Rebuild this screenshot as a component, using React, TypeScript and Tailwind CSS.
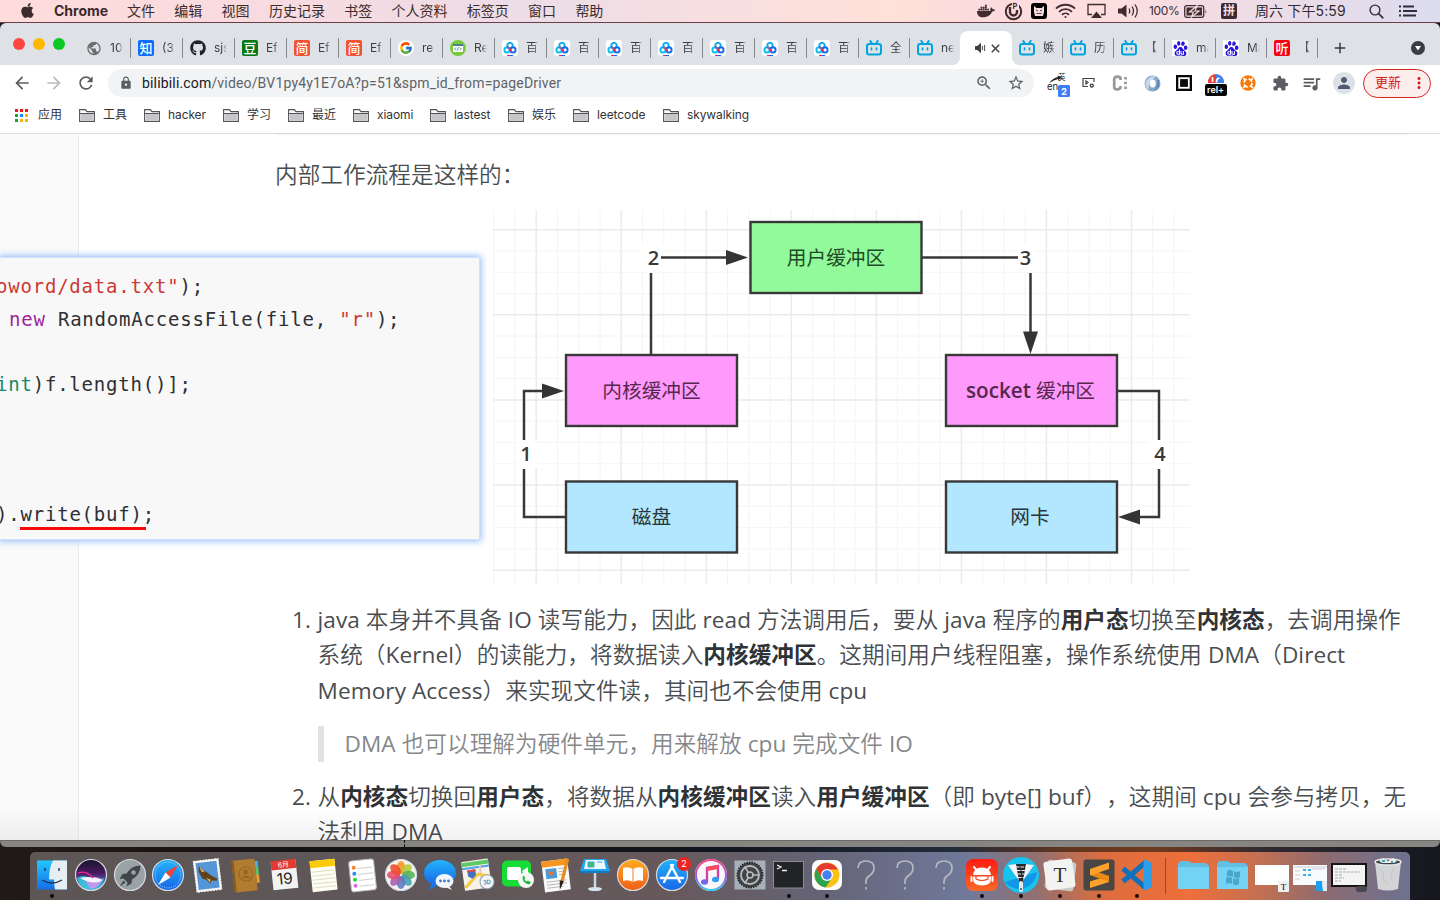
import type { ReactNode } from "react";
import { FaApple, FaDocker, FaGithub } from "react-icons/fa";
import { FcGoogle } from "react-icons/fc";
import { SiBaidu } from "react-icons/si";
import {
  MdArrowBack, MdArrowForward, MdRefresh, MdLock, MdZoomIn, MdStarBorder,
  MdExtension, MdQueueMusic, MdPerson, MdMoreVert, MdAdd, MdPublic,
} from "react-icons/md";

const ui = "font-[Inter,'Noto_Sans_CJK_SC',sans-serif]";

/* ---------- menu bar ---------- */
function MenuBar() {
  const menus = ["文件", "编辑", "视图", "历史记录", "书签", "个人资料", "标签页", "窗口", "帮助"];
  return (
    <header className="flex h-[23px] shrink-0 items-center border-b border-[#6d3d48] bg-[linear-gradient(90deg,#ffdcdb_0%,#f8dbe0_18%,#ecdde7_37%,#f8dfe0_50%,#ffe1d8_62%,#fcdadd_68%,#fedfde_76%,#efdce6_86%,#dcdcef_100%)] pl-[20px] text-[14px] text-[#3b2b2d]">
      <FaApple className="h-[17px] w-[15px] -translate-y-px" />
      <b className="-mt-px ml-[19px] w-[73px] text-[14px] font-bold">Chrome</b>
      <nav className="-mt-px flex gap-[19.300px] whitespace-nowrap">{menus.map((m) => <span key={m}>{m}</span>)}</nav>
      <div className="ml-auto flex h-full items-center text-[#402c30]">
        <FaDocker className="mr-[9px] h-[18px] w-[18px]" />
        <svg className="mr-[8px] h-[19px] w-[19px]" viewBox="0 0 19 19"><circle cx="9.5" cy="9.5" r="7.7" fill="none" stroke="currentColor" strokeWidth="2" /><path d="M6 5v5a3.5 3.5 0 0 0 7 0V8" fill="none" stroke="currentColor" strokeWidth="2.4" /><rect x="8" y="1" width="7" height="6" fill="#fde0e0" /><text x="8.500" y="6.500" fontSize="7.500" fontWeight="700" fill="currentColor">P</text></svg>
        <svg className="mr-[8px] h-[16px] w-[16px]" viewBox="0 0 16 16"><rect width="16" height="16" rx="3" fill="#000" /><path d="M3 3l2.500 2h5L13 3v6l-1 4H4L3 9z" fill="#f5dcdc" /><path d="M5 7l2 1M11 7L9 8M5.500 10.500h5" stroke="#5a4245" /></svg>
        <svg className="mr-[11px] h-[16px] w-[21px]" viewBox="0 0 21 16" fill="none" stroke="currentColor" strokeWidth="1.9"><path d="M1 5.6a13.5 13.5 0 0 1 19 0M4 8.8a9.2 9.2 0 0 1 13 0M7 11.8a5 5 0 0 1 7 0" /><circle cx="10.500" cy="14" r="1" fill="currentColor" stroke="none" /></svg>
        <svg className="mr-[12px] h-[16px] w-[19px]" viewBox="0 0 19 16"><path d="M5 11.500H1v-10h17v10h-4" fill="none" stroke="currentColor" strokeWidth="1.300" /><path d="M9.500 8.500l5.500 6.500h-11z" fill="currentColor" /></svg>
        <svg className="mr-[10px] h-[16px] w-[21px]" viewBox="0 0 21 16"><path d="M0 5.500h3.500L8.500 1.500v13L3.500 10.500H0z" fill="currentColor" /><path d="M11 5.500q1.500 2.500 0 5M14 3.500q3 4.500 0 9M17 1.500q4.500 6.500 0 13" fill="none" stroke="currentColor" strokeWidth="1.300" /></svg>
        <span className="w-[35px] text-[12px] tracking-[-0.300px]">100%</span>
        <svg className="mr-[15px] h-[13px] w-[23px]" viewBox="0 0 23 13"><rect x=".7" y=".7" width="19" height="11.600" rx="2" fill="none" stroke="currentColor" strokeWidth="1.300" /><path d="M21.500 4.500q1.500 2 0 4z" fill="currentColor" /><rect x="2.500" y="2.500" width="15.500" height="8" fill="currentColor" /><path d="M13 .8L5.500 7h4L7.500 12 15 6h-4z" fill="currentColor" stroke="#f6dde2" strokeWidth="1.200" /></svg>
        <span className="mr-[18px] -ml-px flex h-[16px] w-[16px] items-center justify-center rounded-[2px] bg-[#3a2c32] text-[12px] leading-none font-bold text-[#f4dfe6]">拼</span>
        <span className="-mt-px w-[114px] text-[14px] tracking-[0.120px] whitespace-nowrap text-[#332a33]">周六 下午5:59</span>
        <svg className="mr-[15px] h-[15px] w-[15px]" viewBox="0 0 15 15" fill="none" stroke="#35303e" strokeWidth="1.400"><circle cx="6" cy="6" r="4.900" /><path d="M9.700 9.700l4.600 4.600" strokeWidth="1.800" /></svg>
        <svg className="mr-[23px] h-[12px] w-[18px]" viewBox="0 0 18 12" stroke="#302d3c" strokeWidth="2"><path d="M0 1.500h2M4 1.500h11M0 6h2M4 6h14M0 10.500h2M4 10.500h13" /></svg>
      </div>
    </header>
  );
}

/* ---------- tab strip ---------- */
const Letter = ({ bg, children }: { bg: string; children: string }) => (
  <span className={`flex h-4 w-4 items-center justify-center rounded-[2px] text-[13px] leading-none font-medium text-white ${bg}`}>{children}</span>
);
const Bili = () => (
  <svg className="h-4 w-4" viewBox="0 0 16 16" fill="none" stroke="#00a5de" strokeWidth="2" strokeLinecap="round"><rect x="1" y="4" width="14" height="10.500" rx="2.300" /><path d="M4.300 1l1.700 2.500M11.700 1L10 3.500" /><path d="M5.500 8v1.600M10.500 8v1.600" strokeWidth="1.700" /></svg>
);
const Pan = () => (
  <svg className="h-4 w-4" viewBox="0 0 16 16"><rect width="16" height="16" rx="3" fill="#fff" /><g fill="none" strokeWidth="1.900"><circle cx="8" cy="5.600" r="2.700" stroke="#08aef5" /><circle cx="5" cy="9.900" r="2.600" stroke="#08bdf5" /><circle cx="11" cy="9.900" r="2.600" stroke="#126cf2" /><path d="M6.800 8.200l2.600 3M5.300 6.500l1 1.200" stroke="#f52b58" /></g><path d="M5 15.500h3" stroke="#f3264e" /><path d="M8 15.500h3" stroke="#1768ff" /></svg>
);
const Paw = () => <span className="flex h-4 w-4 items-center justify-center rounded-[1px] bg-white"><SiBaidu className="h-[15px] w-[15px] text-[#2b16dd]" /></span>;
const Globe = () => <MdPublic className="h-[17px] w-[17px] text-[#6d6e70]" />;
const Snippet = () => (
  <svg className="h-4 w-4" viewBox="0 0 16 16"><circle cx="8" cy="8" r="8" fill="#76cb39" /><rect x="3" y="4" width="10" height="8" rx="1" fill="#fff" /><path d="M3 5h10" stroke="#1c4e6f" strokeWidth="1.500" /><path d="M6 7.500L4.600 9 6 10.500M10 7.500L11.400 9 10 10.500M8.600 7.300l-1.200 3.300" fill="none" stroke="#317a91" strokeWidth=".8" /></svg>
);

const leftTabs: [ReactNode, string][] = [
  [<Globe />, "10"], [<Letter bg="bg-[#0a6cff]">知</Letter>, "(3"], [<FaGithub className="h-4 w-4 text-[#1f2328]" />, "sjs"],
  [<Letter bg="bg-[#087816]">豆</Letter>, "Ef"], [<Letter bg="bg-[#f4512f]">简</Letter>, "Ef"], [<Letter bg="bg-[#f4512f]">简</Letter>, "Ef"],
  [<span className="flex h-4 w-4 items-center justify-center rounded-full bg-white"><FcGoogle className="h-[14px] w-[14px]" /></span>, "re"],
  [<Snippet />, "Re"], [<Pan />, "百"], [<Pan />, "百"], [<Pan />, "百"], [<Pan />, "百"], [<Pan />, "百"], [<Pan />, "百"], [<Pan />, "百"],
];
const midTabs: [ReactNode, string][] = [[<Bili />, "全"], [<Bili />, "ne"]];
const rightTabs: [ReactNode, string][] = [[<Bili />, "嫉"], [<Bili />, "历"], [<Bili />, "【"], [<Paw />, "ma"], [<Paw />, "Ma"], [<Letter bg="bg-[#fb0010]">听</Letter>, "【"]];

function Tab({ icon, title, narrow, last }: { icon: ReactNode; title: string; narrow?: boolean; last?: boolean }) {
  return (
    <div className={`flex h-5 shrink-0 items-center border-r pl-[7px] ${last ? "border-transparent" : "border-[#85888c]"} ${narrow ? "w-[51px]" : "w-[52px]"}`}>
      <span className="flex w-4 shrink-0 justify-center">{icon}</span>
      <span className="ml-[8px] w-[13px] overflow-hidden [mask-image:linear-gradient(90deg,#000_60%,transparent)] text-[12px] leading-5 whitespace-nowrap text-[#3c3f43]">{title}</span>
    </div>
  );
}

function TabStrip() {
  return (
    <div className="flex h-[42px] shrink-0 items-start rounded-t-[6px] bg-[#dee1e6]">
      <div className="flex h-[42px] w-[79px] shrink-0 gap-2 pt-[15px] pl-[13px]">
        <i className="h-3 w-3 rounded-full bg-[#fb473f]" /><i className="h-3 w-3 rounded-full bg-[#fdb802]" /><i className="h-3 w-3 rounded-full bg-[#0bc925]" />
      </div>
      <div className="flex pt-[15px]">
        {leftTabs.map(([i, t], k) => <Tab key={k} icon={i} title={t} />)}
        {midTabs.map(([i, t], k) => <Tab key={k} icon={i} title={t} narrow last={k === 1} />)}
      </div>
      <div className="relative mt-2 -ml-px flex h-[34px] w-[52px] shrink-0 items-center gap-[5px] rounded-t-[8px] bg-white pl-[15px] before:absolute before:bottom-0 before:-left-2 before:h-2 before:w-2 before:bg-[radial-gradient(circle_at_0_0,transparent_8px,white_8px)] after:absolute after:-right-2 after:bottom-0 after:h-2 after:w-2 after:bg-[radial-gradient(circle_at_100%_0,transparent_8px,white_8px)]">
        <svg className="h-3 w-[11px]" viewBox="0 0 11 12"><path d="M0 4h2.300L6 .8v10.400L2.300 8H0z" fill="#3f4246" /><path d="M7.500 4v4M9.600 3v6" stroke="#56595d" strokeWidth="1.100" /></svg>
        <svg className="h-[9px] w-[9px]" viewBox="0 0 9 9"><path d="M.8.8l7.400 7.400M8.200.8L.8 8.200" stroke="#3f4246" strokeWidth="1.500" /></svg>
      </div>
      <div className="flex pt-[15px]">{rightTabs.map(([i, t], k) => <Tab key={k} icon={i} title={t} narrow />)}</div>
      <MdAdd className="mt-[16px] ml-[13px] h-[18px] w-[18px] text-[#35383b]" />
      <svg className="mt-[18px] mr-[15px] ml-auto h-[14px] w-[14px]" viewBox="0 0 14 14"><circle cx="7" cy="7" r="7" fill="#3a3d41" /><path d="M4 5h6L7 9.500z" fill="#fff" /></svg>
    </div>
  );
}

/* ---------- toolbar ---------- */
function Toolbar() {
  return (
    <div className="flex h-[36px] shrink-0 items-center bg-white pl-[12px] text-[#5a5d61]">
      <MdArrowBack className="h-[20px] w-[20px]" /><MdArrowForward className="ml-[12px] h-[20px] w-[20px] text-[#b9bbbe]" /><MdRefresh className="ml-[12px] h-[20px] w-[20px]" />
      <div className="ml-[12px] flex h-[28px] w-[926px] items-center rounded-full bg-[#f1f3f4] pl-[11px]">
        <MdLock className="h-[14px] w-[14px]" />
        <span className="ml-[9px] font-[Roboto,sans-serif] text-[14px] tracking-[0.165px] text-[#5f6368]"><span className="text-[#17191c]">bilibili.com</span>/video/BV1py4y1E7oA?p=51&amp;spm_id_from=pageDriver</span>
        <MdZoomIn className="mr-[14px] ml-auto h-[18px] w-[18px]" /><MdStarBorder className="mr-[9px] h-[18px] w-[18px]" />
      </div>
      <div className="ml-[13px] flex items-center">
        <svg className="h-[28px] w-[23px]" viewBox="0 0 23 28"><path d="M2 14q4-5 9-6l-.5-1.500 4 1.500-3 3.500-.3-1.500Q7 11 2 14z" fill="#222" /><text x="11" y="11" fontSize="7.500" fill="#222">英</text><text x="0" y="21" fontSize="9.500" fill="#222">en</text><rect x="11" y="16" width="12" height="12" rx="1.500" fill="#3b7df5" /><text x="14" y="25.500" fontSize="9.500" fontWeight="700" fill="#fff">2</text></svg>
        <svg className="ml-[12px] h-[12px] w-[13px]" viewBox="0 0 13 12" fill="none" stroke="#444"><path d="M12 5V1.500H1v8h5M4 4v3l2-1.500z" strokeWidth="1.200" /><circle cx="9.800" cy="8.600" r="1.500" strokeWidth="1.400" /></svg>
        <svg className="ml-[17px] h-[16px] w-[16px]" viewBox="0 0 16 16" fill="none" stroke="#989898" strokeWidth="2.700"><path d="M8.500 5V3.500Q8.500 1.700 5.500 1.700T2.200 4v8q0 2.300 3 2.300t3.300-2V11" /><path d="M13.500 2v12" strokeDasharray="2.500 2.200" /></svg>
        <svg className="ml-[16px] h-[17px] w-[17px]" viewBox="0 0 17 17"><circle cx="8.500" cy="8.500" r="8" fill="#86acd0" /><path d="M12 1.500Q6 0 2 6q-2 6 3 9Q3 7 12 1.500z" fill="#c6d8ea" /><path d="M15 5q2 8-5 11 4-6 3-11z" fill="#5d8dbd" /><ellipse cx="8.700" cy="8.500" rx="3" ry="4" fill="#fff" /></svg>
        <svg className="ml-[15px] h-[16px] w-[16px]" viewBox="0 0 16 16"><rect width="16" height="16" fill="#080808" /><rect x="3.200" y="3.200" width="9.600" height="9.600" fill="none" stroke="#fff" strokeWidth="1.800" /></svg>
        <svg className="ml-[13px] h-[28px] w-[22px]" viewBox="0 0 22 28"><path d="M3 14a8 8 0 0 1 8-9v9z" fill="#e84036" /><path d="M11 5a8 8 0 0 1 8 9h-8z" fill="#4380ef" /><path d="M7.500 8v5M14.500 9.500q-3-1-3 4" stroke="#fff" strokeWidth="1.700" fill="none" /><rect y="15" width="22" height="12" rx="2" fill="#050505" /><text x="2" y="24" fontSize="9" fontWeight="600" fill="#fff">rel+</text></svg>
        <svg className="ml-[13px] h-[16px] w-[16px]" viewBox="0 0 16 16"><circle cx="8" cy="8" r="7.700" fill="#f57a0c" /><circle cx="8" cy="8" r="4" fill="none" stroke="#fff" strokeWidth="1.600" strokeDasharray="4.500 1.800" /><path d="M11 5l2-2M5 11l-2 2M5 5L3.500 3M11 11l2 2" stroke="#fff" strokeWidth="1.500" /></svg>
        <MdExtension className="ml-[16px] h-[17px] w-[17px]" /><MdQueueMusic className="ml-[12px] h-[21px] w-[21px]" />
        <span className="ml-[11px] flex h-[22px] w-[22px] items-center justify-center rounded-full bg-[#dde1e6]"><MdPerson className="h-[18px] w-[18px] text-[#4c5a73]" /></span>
        <span className="ml-[8px] flex h-[29px] w-[68px] items-center rounded-full border border-[#d7251f] bg-[#fceeed] pl-[11px] text-[13px] whitespace-nowrap text-[#d32020]">更新<MdMoreVert className="ml-[9px] h-[18px] w-[18px] shrink-0" /></span>
      </div>
    </div>
  );
}

const bookmarks: [string, string][] = [
  ["工具", "w-[65px]"], ["hacker", "w-[79px]"], ["学习", "w-[65px]"], ["最近", "w-[65px]"], ["xiaomi", "w-[77px]"],
  ["lastest", "w-[78px]"], ["娱乐", "w-[65px]"], ["leetcode", "w-[90px]"], ["skywalking", "w-[90px]"],
];
function Bookmarks() {
  return (
    <div className="flex h-[33px] shrink-0 items-center border-b border-[#dcdcdc] bg-white pb-[4px] pl-[15px] text-[12px] tracking-[-0.100px] text-[#323336]">
      <svg className="h-[13px] w-[13px]" viewBox="0 0 13 13"><g fill="#f01818"><path d="M0 0h3v3H0zM5 0h3v3H5zM10 0h3v3h-3z" /></g><path d="M0 5h3v3H0zM0 10h3v3H0z" fill="#15a04b" /><path d="M5 5h3v3H5z" fill="#1689f5" /><path d="M10 5h3v3h-3zM5 10h3v3H5zM10 10h3v3h-3z" fill="#f7b20a" /></svg>
      <span className="ml-[10px] w-[41px]">应用</span>
      {bookmarks.map(([b, w]) => (
        <span key={b} className={`flex shrink-0 items-center gap-2 whitespace-nowrap ${w}`}>
          <svg className="h-[13px] w-4 shrink-0" viewBox="0 0 16 13"><path d="M.6 12.400V.6h5.800l1.500 2h7.500v9.800z" fill="#fff" stroke="#515357" strokeWidth="1.100" /><path d="M1.500 4.500h13v7h-13z" fill="#c7c7c9" /><path d="M1 4.500h14" stroke="#515357" /></svg>
          <span>{b}</span>
        </span>
      ))}
    </div>
  );
}

/* ---------- diagram ---------- */
function Diagram() {
  const v = Array.from({ length: 33 }, (_, i) => 0.7 + i * 21.26);
  const h = Array.from({ length: 18 }, (_, i) => -1.6 + i * 21.28);
  const box = { width: 171, height: 71, stroke: "#383838", strokeWidth: 2.4 };
  return (
    <svg className="mt-[22px] ml-[493px] block h-[374px] w-[697px] font-[Open_Sans,'Noto_Sans_CJK_SC',sans-serif]" viewBox="0 0 697 374">
      {v.map((x, i) => <path key={i} d={`M${x} 0V374`} stroke={i % 4 === 2 ? "#ebebeb" : "#f4f4f4"} strokeWidth={i % 4 === 2 ? 1.5 : 1} />)}
      {h.map((y, i) => <path key={i} d={`M0 ${y}H697`} stroke={i % 4 === 1 ? "#ebebeb" : "#f4f4f4"} strokeWidth={i % 4 === 1 ? 1.5 : 1} />)}
      <rect x="148" y="34" width="24" height="28" fill="#fff" /><rect x="524" y="34" width="18" height="28" fill="#fff" />
      <rect x="24" y="230" width="20" height="28" fill="#fff" /><rect x="656" y="230" width="20" height="28" fill="#fff" />
      <g fill="none" stroke="#383838" strokeWidth="2.500">
        <path d="M73 307H31V259M31 230V181H54M158 144V63M168 47.500H238M429 47.500H525M537.500 63V126M624 181H666V230M666 259V307H642" />
      </g>
      <path d="M49 173.500L71 181l-22 7.500zM233 40l22 7.500-22 7.500zM530 121.500h15L537.500 144zM647 299.500v15L625 307z" fill="#343434" />
      <rect x="257.500" y="12" {...box} fill="#93fa9b" />
      <rect x="73" y="145" {...box} fill="#ff99fb" /><rect x="453" y="145" {...box} fill="#ff99fb" />
      <rect x="73" y="271.500" {...box} fill="#b3e6ff" /><rect x="453" y="271.500" {...box} fill="#b3e6ff" />
      <g fontSize="19.700" textAnchor="middle" fill="#26353a">
        <text x="343" y="54.500" fill="#1d4b26">用户缓冲区</text><text x="158.500" y="187.500" fill="#54284f">内核缓冲区</text>
        <text x="537.500" y="187.500" fill="#54284f"><tspan fontWeight="600" fontSize="20.700">socket</tspan> 缓冲区</text>
        <text x="158.500" y="314">磁盘</text><text x="537" y="314">网卡</text>
      </g>
      <g fontSize="20" fontWeight="600" textAnchor="middle" fill="#383838">
        <text x="160.500" y="54.800">2</text><text x="532.500" y="54.800">3</text><text x="33" y="250.800">1</text><text x="667" y="250.800">4</text>
      </g>
    </svg>
  );
}

const Str = ({ children }: { children: string }) => <span className="text-[#cc3a36]">{children}</span>;
function CodePanel() {
  return (
    <pre className="absolute top-[123px] left-0 h-[283px] w-[480px] overflow-hidden border-t border-r border-b border-[#cfe1fb] bg-[#f8f8f8] pt-[12px] font-['DejaVu_Sans_Mono',monospace] text-[19px] leading-[32.600px] tracking-[0.790px] text-[#2d3034] shadow-[0_0_7px_1px_#8db9f5]">
      <span className="-ml-[4px] block"><Str>{'oword/data.txt"'}</Str>);</span>
      <span className="ml-[9px] block"><span className="text-[#9a279c]">new</span> RandomAccessFile(file, <Str>{'"r"'}</Str>);</span>
      <span className="block">{" "}</span>
      <span className="-ml-[4px] block"><span className="text-[#168a6a]">int</span>)f.length()];</span>
      <span className="block">{" "}</span><span className="block">{" "}</span><span className="block">{" "}</span>
      <span className="-ml-[4px] block">).<span className="-mr-[3px] inline-block h-[32px] border-b-3 border-[#f40b0b] pr-[3px]">write(buf)</span>;</span>
    </pre>
  );
}

/* Latin runs are set at regular weight, the Chinese around them a step lighter. */
const Mixed = ({ children }: { children: string }) => (
  <>{children.split(/([\x21-\x7e]+)/).map((s, i) => (i % 2 ? <span key={i} className="font-normal">{s}</span> : s))}</>
);

function Page() {
  return (
    <main className="relative h-[706px] shrink-0 overflow-hidden bg-white font-[Open_Sans,'Noto_Sans_CJK_SC',sans-serif] text-[22.600px] text-[#4a4d50] [text-spacing-trim:space-all]">
      <aside className="absolute inset-y-0 left-0 w-[79px] border-r border-[#ececec] bg-[#fafafa]" />
      <hr className="mr-[32px] ml-[277px] border-[#f1f1f1]" />
      <h2 className="mt-[22px] ml-[275px] h-[31px] leading-[36px] font-[350] tracking-[0.080px]">内部工作流程是这样的：</h2>
      <Diagram />
      <CodePanel />
      <ol className="mt-[17.500px] ml-[292px] font-[350] tracking-[0.075px] whitespace-nowrap [&_b]:text-[#303336]">
        <li className="flex leading-[35.500px]">
          <span className="w-[25.500px] shrink-0 font-normal">1.</span>
          <div>
            <p><Mixed>java 本身并不具备 IO 读写能力，因此 read 方法调用后，要从 java 程序的</Mixed><b>用户态</b>切换至<b>内核态</b>，去调用操作</p>
            <p><Mixed>系统（Kernel）的读能力，将数据读入</Mixed><b>内核缓冲区</b><Mixed>。这期间用户线程阻塞，操作系统使用 DMA（Direct</Mixed></p>
            <p><Mixed>Memory Access）来实现文件读，其间也不会使用 cpu</Mixed></p>
            <blockquote className="my-[18px] border-l-[6px] border-[#e2e2e2] pl-[21px] text-[#85878a]"><Mixed>DMA 也可以理解为硬件单元，用来解放 cpu 完成文件 IO</Mixed></blockquote>
          </div>
        </li>
        <li className="-mt-[0.500px] flex leading-[35px]">
          <span className="w-[25.500px] shrink-0 font-normal">2.</span>
          <div>
            <p>从<b>内核态</b>切换回<b>用户态</b>，将数据从<b>内核缓冲区</b>读入<b>用户缓冲区</b><Mixed>（即 byte[] buf），这期间 cpu 会参与拷贝，无</Mixed></p>
            <p><Mixed>法利用 DMA</Mixed></p>
          </div>
        </li>
      </ol>
      <div className="absolute inset-x-0 bottom-0 h-[34px] bg-gradient-to-b from-transparent to-black/5" />
    </main>
  );
}

/* ---------- dock ---------- */
const Q = () => <path d="M10 11q0-7 8-7t8 7q0 5-5 8-3 2-3 6v2M18 30v2.500" fill="none" stroke="#b5b8c0" strokeWidth="1.700" />;
const Round = ({ fill, children }: { fill: string; children?: ReactNode }) => <><circle cx="18" cy="18" r="15.500" fill={fill} stroke="#d5d8dc" strokeWidth="1.200" />{children}</>;
const petals = ["#f7941d", "#b3cc35", "#55b35b", "#43a0b1", "#5b78c2", "#a85cb0", "#e44c68", "#ee4c28"];

const dock: { a: ReactNode; on?: boolean }[] = [
  { on: true, a: <><rect x="3" y="3.500" width="30" height="29" fill="url(#blue)" /><path d="M19 3.500h14v29H21q-1-5-1-10h-5Q15 11 19 3.500z" fill="#e6edf3" /><path d="M11 11v3M25 11v3M8 23q10 6 20 0" stroke="#183354" strokeWidth="1.400" fill="none" /></> },
  { a: <><Round fill="url(#siri)" /><path d="M4 21q6-4 12 0t15 0q-1 9-13 11Q6 31 4 21z" fill="#35d3ee" opacity=".75" /><path d="M13 25q5-8 16-3-2 8-11 10z" fill="#e58df0" opacity=".8" /><path d="M7 21q11-3 23 2-9 6-23-2z" fill="#fff" opacity=".9" /><path d="M5 16q9-3 15 5" fill="none" stroke="#e22790" strokeWidth="1.500" /></> },
  { a: <Round fill="#99a3a5"><g transform="translate(1.500 1.500)"><path d="M27 7q-9 0-14 8l-4 .5-3 5 4-.5 4 4-1 4 5-3 .5-4Q27 16 27 7z" fill="#41464b" /><circle cx="20" cy="14" r="2.300" fill="#99a3a5" /><path d="M10 22l-4 6 6-4" fill="#41464b" /></g></Round> },
  { a: <Round fill="url(#blue2)"><circle cx="18" cy="18" r="12.800" fill="none" stroke="#a6dcff" strokeDasharray="1 1.300" /><path d="M28 8L15.500 15.500l5 5z" fill="#f04438" /><path d="M8 28l7.500-12.500 5 5z" fill="#fff" /></Round> },
  { a: <g transform="rotate(-7 18 18)"><rect x="6" y="3" width="25" height="31" fill="#f7f7f5" stroke="#fff" strokeDasharray="2 1" /><rect x="8" y="5" width="21" height="27" fill="#5596d8" /><path d="M11 7l4 6 3 2 4 4 6 4-1 2-5-1-2 3-3-4-4-2-3-7z" fill="#60431d" /><path d="M11 7l5 8-3-1M17 21l4 2-1 3z" fill="#d8b26b" /></g> },
  { a: <g transform="rotate(-6 18 18)"><path d="M28 5h3v6h-3z" fill="#3fb4e8" /><path d="M28 11h3v8h-3z" fill="#62c269" /><path d="M28 19h3v8h-3z" fill="#f7962f" /><rect x="5" y="2.500" width="23" height="32" rx="1.500" fill="#b17c2f" /><path d="M6 3v31" stroke="#8a5c1c" strokeWidth="2" /><circle cx="18" cy="17" r="7" fill="none" stroke="#936728" /><circle cx="18" cy="15" r="2.500" fill="#936728" /><path d="M13 21q5-5 10 0" fill="#936728" /></g> },
  { a: <g transform="rotate(-6 18 18)"><rect x="5" y="29" width="28" height="4" fill="#54585b" /><rect x="5" y="4" width="25" height="28" fill="#f3f3f3" /><path d="M5 3h25v9H5z" fill="#e33a31" /><text x="17.500" y="10" fontSize="7" textAnchor="middle" fill="#fff">6月</text><text x="17.500" y="27" fontSize="15.500" textAnchor="middle" fill="#222">19</text></g> },
  { a: <g transform="rotate(-6 18 18)"><rect x="6" y="3" width="25" height="31" fill="#fffef2" /><path d="M6 3h25v7H6z" fill="#fccb08" /><path d="M7 14h23M7 18h23M7 22h23M7 26h23M7 30h23" stroke="#dcdccb" /></g> },
  { a: <g transform="rotate(-6 18 18)"><rect x="6" y="3" width="25" height="31" rx="3" fill="#fff" stroke="#bdbdbd" /><path d="M14 11h15M14 17h15M14 23h15M14 29h15" stroke="#d0d0d0" /><circle cx="10.500" cy="10" r="2" fill="#f78428" /><circle cx="10.500" cy="16" r="2" fill="#2b8df4" /><circle cx="10.500" cy="22" r="2" fill="#27d333" /><circle cx="10.500" cy="28" r="2" fill="#d567e8" /></g> },
  { a: <Round fill="#f4f4f2">{petals.map((c, i) => <ellipse key={c} cx="18" cy="10.500" rx="4.300" ry="6.500" fill={c} opacity=".88" transform={`rotate(${i * 45} 18 18)`} />)}</Round> },
  { a: <><ellipse cx="18" cy="16" rx="16" ry="13" fill="url(#blue2)" /><path d="M10 24q0 6-4 8 6 0 10-5z" fill="#1b76ea" /><ellipse cx="22.500" cy="24" rx="9" ry="7" fill="#f3f6fa" /><path d="M27 29l3 4-7-3z" fill="#f3f6fa" /><g fill="#397dc7"><circle cx="18.500" cy="24" r="1.400" /><circle cx="22.500" cy="24" r="1.400" /><circle cx="26.500" cy="24" r="1.400" /></g></> },
  { a: <g transform="rotate(-8 18 18)"><rect x="3" y="3" width="27" height="29" rx="1" fill="#f7f3ea" /><path d="M3 6h27" stroke="#5ec965" strokeWidth="4" /><path d="M3 10h27" stroke="#4f9fe4" strokeWidth="2" /><path d="M21 9v23" stroke="#e4c7c6" strokeWidth="2" /><path d="M4 29l14-12 12 4" fill="none" stroke="#f5cc3e" strokeWidth="3" /><path d="M8 12h8v6l-4 3-4-3z" fill="#4472bf" /><path d="M8 12h8v2H8z" fill="#df4b4b" /><circle cx="26" cy="26" r="7" fill="#f4f6f8" stroke="#8ba2b6" /><text x="26" y="28.500" fontSize="6" textAnchor="middle" fill="#3c5871">3D</text></g> },
  { a: <><rect x="3" y="3.500" width="29" height="26" rx="5" fill="#17dc35" /><rect x="8" y="10" width="14" height="13" rx="2" fill="#fff" /><path d="M23 14l6-4v11z" fill="#fff" /><circle cx="27" cy="23" r="8" fill="#f7f7f7" /><path d="M24 18.500q-2 7 6 9l2-2-3-2-1.500 1q-2-1-2-3l1-1z" fill="#18bc38" /></> },
  { a: <g transform="rotate(-7 18 18)"><rect x="5" y="3" width="26" height="31" fill="#fafafa" /><path d="M5 3h26v6H5z" fill="#f79521" /><rect x="8" y="11" width="11" height="10" fill="#4b9bdc" /><path d="M10 14h7l-3.500 5z" fill="#e4782a" /><path d="M21 12h7M21 15h7M21 18h7M8 24h20M8 27h20M8 30h16" stroke="#b7b7b7" /><path d="M30 3l3 1-8 21-4 7v-6z" fill="#e78e1c" /><path d="M21 24l4 1-5 8z" fill="#222" /></g> },
  { a: <><path d="M7 2h22l4 12H3z" fill="#20a6ee" /><path d="M9 3h18l2 9H7z" fill="#edf7fb" /><path d="M11 5h6v5h-6zM20 5h5" fill="#43bd67" stroke="#3ba5df" /><path d="M3 14h30v2H3z" fill="#1478bd" /><path d="M18 16v15" stroke="#c5d8e4" strokeWidth="2.500" /><ellipse cx="18" cy="32" rx="7" ry="2" fill="#d3e5f0" /></> },
  { a: <Round fill="url(#orange)"><path d="M18 12q-5-3-10-1v13q5-2 10 1 5-3 10-1V11q-5-2-10 1z" fill="#fff" /><path d="M18 12v13" stroke="#f07b21" /></Round> },
  { a: <><Round fill="url(#blue2)"><path d="M17 8l9 17M19 8L10 25M7 21h22" stroke="#fff" strokeWidth="2.400" strokeLinecap="round" /></Round><circle cx="30" cy="7" r="7" fill="#ed2424" /><text x="30" y="10" fontSize="9" textAnchor="middle" fill="#fff">2</text></> },
  { a: <Round fill="#f8f8fc"><circle cx="18" cy="18" r="15" fill="none" stroke="url(#music)" strokeWidth="2" /><path d="M14 25V11l11-2v13" fill="none" stroke="#d43ea0" strokeWidth="2.300" /><path d="M14 12l11-2" stroke="#ff4b5c" strokeWidth="4" /><ellipse cx="11.500" cy="25" rx="3.500" ry="2.800" fill="#7563e8" /><ellipse cx="22.500" cy="22.500" rx="3.500" ry="2.800" fill="#2f9bf4" /></Round> },
  { a: <><rect x="2.500" y="3.500" width="31" height="29" fill="#a5b0b8" /><circle cx="18" cy="18" r="12.500" fill="#424448" stroke="#29292b" strokeWidth="2" strokeDasharray="1.500 1" /><circle cx="18" cy="18" r="9" fill="none" stroke="#b9bcbf" strokeWidth="1.800" /><circle cx="18" cy="18" r="3" fill="none" stroke="#b9bcbf" strokeWidth="1.600" /><path d="M21 18h6M16.500 15.500l-4-6M16.500 20.500l-4 6" stroke="#b9bcbf" strokeWidth="1.600" /></> },
  { on: true, a: <><rect x="2.500" y="4.500" width="30" height="26.500" fill="#222426" stroke="#8b8e91" /><path d="M6 8l4 2-4 2M11 13.500h5" stroke="#eee" fill="none" strokeWidth="1.300" /></> },
  { on: true, a: <><rect x="3" y="3" width="30" height="30" rx="7" fill="#fbfbfb" /><circle cx="18" cy="18" r="12.500" fill="#fbc116" /><path d="M7.200 11.700A12.500 12.500 0 0 1 28.800 12.500H18z" fill="#e53b30" /><path d="M7.200 11.700A12.500 12.500 0 0 0 16.500 30.400L23 21 18 18 12.500 20.500z" fill="#2ca54e" /><path d="M7.200 11.700L13 21l5-9z" fill="#e53b30" /><circle cx="18" cy="18" r="6" fill="#fff" /><circle cx="18" cy="18" r="4.700" fill="#4580ee" /></> },
  { a: <Q /> }, { a: <Q /> }, { a: <Q /> },
  { on: true, a: <><rect x="2" y="2" width="32" height="32" rx="7" fill="url(#red)" /><path d="M12.500 13l-2.500-3M23.500 13l2.500-3" stroke="#fff" strokeWidth="2" strokeLinecap="round" /><path d="M9 18q1-7.500 9-7.500t9 7.500z" fill="#fff" /><path d="M9 19.500h18v2q0 7-9 7t-9-7z" fill="#fff" /><path d="M12 19v3q6 3 12 0v-3" fill="none" stroke="#f44326" strokeWidth="1.200" /><path d="M7.500 20v4M28.500 20v4" stroke="#fff" strokeWidth="2" strokeLinecap="round" /></> },
  { on: true, a: <><circle cx="18" cy="18" r="18" fill="#18c3ee" /><path d="M2 25L34 15a18 18 0 0 1-32 10z" fill="#1297e8" /><path d="M5 8l10-1 2 18zM31 8l-10-1-2 18z" fill="#f5f8fa" /><path d="M13 7h10l-3.500 20h-3z" fill="#26282a" /><path d="M13 10h10M14 13.500h8M14.500 17h7M15 20.500h6" stroke="#eef1f3" strokeWidth="1.200" strokeDasharray="3.500 1" /><path d="M18 26v7" stroke="#e6e9ea" strokeWidth="4" strokeLinecap="round" /><circle cx="18" cy="32" r="1" fill="#444" /></> },
  { on: true, a: <><rect x="4" y="4" width="29" height="29" rx="3" fill="#c9c9c9" transform="rotate(7 18 18)" /><rect x="3" y="3" width="29" height="29" rx="3" fill="#f3f3f2" transform="rotate(-8 18 18)" /><text x="18" y="25" fontSize="21" textAnchor="middle" fontFamily="Liberation Serif" fill="#333">T</text></> },
  { on: true, a: <><rect x="2.500" y="2.500" width="31" height="31" rx="2.500" fill="#484744" /><path d="M28 18.500v6.500L9 31v-6.500z" fill="#ffa12c" /><path d="M9 12v6l19 7v-6z" fill="#e98b14" /><path d="M28 5.500V12L9 18.500V12z" fill="#ffa12c" /></> },
  { on: true, a: <><path d="M4 11.500L27 31M4 24.500L27 5" stroke="#1170bb" strokeWidth="5" /><path d="M24.500 2l8.500 4v24l-8.500 4z" fill="#2b9fe9" /></> },
];

const Folder = ({ win }: { win?: boolean }) => (
  <><path d="M2 7l2-3h9l2 2h15l3 3v23H2z" fill="#63bee5" /><path d="M2 10h31v22H2z" fill="#74d2f5" />{win && <path d="M12 14q4-2 6 0v6q-3-2-6 0zM19 14q3 2 6 0v6q-3 2-6 0zM11 21q4-2 6 0v6q-3-2-6 0zM18 21q3 2 6 0v6q-3 2-6 0z" fill="#4aa5cd" />}</>
);
const tray: ReactNode[] = [
  <Folder />, <Folder win />,
  <><rect x="1" y="8" width="34" height="20" fill="#fff" /><rect x="24" y="24" width="11" height="11" rx="1" fill="#efefef" /><text x="29.500" y="33" fontSize="9" textAnchor="middle" fontFamily="Liberation Serif">T</text></>,
  <><rect x="1" y="8" width="34" height="20" fill="#f8fafc" /><path d="M1 10h34M3 14h5M3 18h5M3 22h5M20 12h13" stroke="#c9ced3" /><path d="M11 12h3v2h-3zM16 12h3v2h-3zM11 17h3v2h-3zM16 17h3v2h-3z" fill="#3eb1eb" /><rect x="24" y="24" width="11" height="10" fill="#1f9ef0" /><path d="M30 24h5v10h-4q-1-5-1-10z" fill="#e8edf2" /></>,
  <><rect x="1" y="7" width="34" height="22" fill="#f4f4f4" stroke="#151515" strokeWidth="2" /><path d="M4 12h12M4 15h25M4 18h7M4 21h9M4 24h6" stroke="#aaa" strokeDasharray="3 1" /><rect x="25" y="29" width="11" height="6" rx="3" fill="#4a4650" /></>,
  <><path d="M5 5h26l-3 27q-10 3-20 0z" fill="#d9dcdd" opacity=".93" /><ellipse cx="18" cy="5" rx="13" ry="3" fill="#3e4446" stroke="#e4e8e8" strokeWidth="1.500" /><path d="M9 4l4-3 5 3 5-3 4 3-3 2H12z" fill="#e8e8e4" /><path d="M12 4h3M21 5h2" stroke="#38a5cc" strokeWidth="2" /><path d="M10 12q5 4 3 10l5 6M25 11q-6 5-3 12" fill="none" stroke="#c3c7c8" /></>,
];

function Dock() {
  return (
    <div className="mx-[30px] mt-[5px] flex h-[48px] shrink-0 rounded-t-[5px] bg-[linear-gradient(90deg,#5d5655_0%,#5f5759_28%,#67595b_46%,#646375_57%,#70799a_68%,#93706f_73%,#de6d3d_78%,#ee6f3b_84%,#c47052_89%,#8b6b71_94%,#6d7291_100%)] pl-[2.600px]">
      {dock.map((d, i) => (
        <div key={i} className="flex w-[38.780px] shrink-0 flex-col items-center pt-[4.500px]">
          <svg className="h-9 w-9 shrink-0 overflow-visible" viewBox="0 0 36 36">{d.a}</svg>
          {d.on && <i className="mt-[1px] h-1 w-1 rounded-full bg-[#16080b]" />}
        </div>
      ))}
      <i className="mt-[6px] mr-[8.500px] ml-[8.600px] h-[36px] w-px shrink-0 bg-[#94492d]" />
      {tray.map((t, i) => <div key={i} className="flex w-[38.700px] shrink-0 justify-center pt-[4.500px]"><svg className="h-9 w-9 overflow-visible" viewBox="0 0 36 36">{t}</svg></div>)}
    </div>
  );
}

export default function App() {
  return (
    <div className={`relative flex h-[900px] w-[1440px] flex-col overflow-hidden bg-[linear-gradient(90deg,#211a19_0%,#151213_20%,#11151d_50%,#212b3a_66%,#61351f_74%,#703b1e_80%,#302a32_88%,#15161e_100%)] ${ui}`}>
      <svg className="absolute h-0 w-0"><defs>
        <linearGradient id="blue" x2="0" y2="1"><stop stopColor="#21c7ff" /><stop offset="1" stopColor="#166ee9" /></linearGradient>
        <linearGradient id="blue2" x2="0" y2="1"><stop stopColor="#23b5fc" /><stop offset="1" stopColor="#1764e5" /></linearGradient>
        <linearGradient id="orange" x2="0" y2="1"><stop stopColor="#ffac20" /><stop offset="1" stopColor="#ef5e18" /></linearGradient>
        <linearGradient id="red" x2="0" y2="1"><stop stopColor="#fb1b12" /><stop offset="1" stopColor="#fa6927" /></linearGradient>
        <linearGradient id="siri" x2="0" y2="1"><stop stopColor="#151329" /><stop offset=".45" stopColor="#4a1a63" /><stop offset="1" stopColor="#49c6ea" /></linearGradient>
        <linearGradient id="music" x2="0" y2="1"><stop stopColor="#f94687" /><stop offset=".6" stopColor="#9d59ee" /><stop offset="1" stopColor="#32c9ef" /></linearGradient>
      </defs></svg>
      <MenuBar />
      <div className="flex h-[824px] shrink-0 flex-col overflow-hidden rounded-b-[6px]">
        <TabStrip /><Toolbar /><Bookmarks /><Page />
        <div className="h-[7px] shrink-0 border-t border-[#6c6a68] bg-[#878582]" />
      </div>
      <Dock />
      <i className="absolute top-[840px] left-[404px] h-[7px] border-l border-dashed border-black" />
    </div>
  );
}
